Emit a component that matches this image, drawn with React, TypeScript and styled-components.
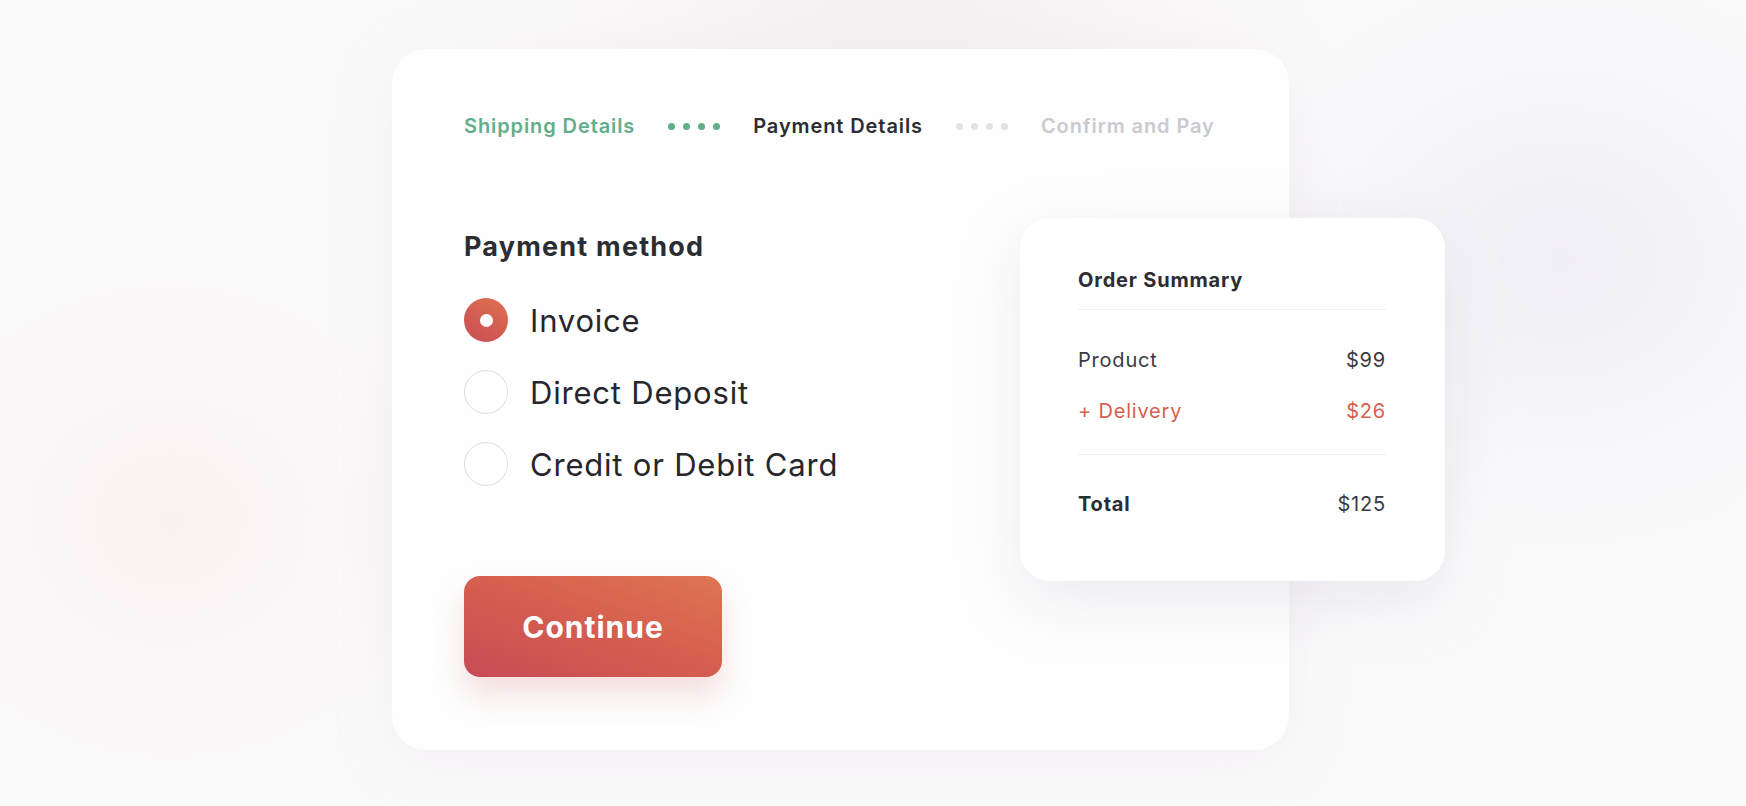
import React from 'react';
import styled, { createGlobalStyle } from 'styled-components';

const GlobalStyle = createGlobalStyle`
  html, body {
    margin: 0;
    padding: 0;
  }
  body {
    font-family: Inter, "Noto Sans", sans-serif;
    background: #fbfafb;
    color: #2c2c33;
  }
`;

const Page = styled.div`
  width: 1746px;
  height: 806px;
  overflow: hidden;
  box-sizing: border-box;
  padding: 49px 0 0 392px;
  background:
    radial-gradient(ellipse 420px 380px at 170px 520px, rgba(247, 232, 232, 0.45), transparent 70%),
    radial-gradient(ellipse 500px 420px at 1560px 260px, rgba(236, 234, 242, 0.7), transparent 70%),
    radial-gradient(ellipse 600px 200px at 900px 20px, rgba(240, 234, 236, 0.6), transparent 70%),
    #fbfafb;
`;

const Card = styled.div`
  position: relative;
  width: 897px;
  height: 701px;
  box-sizing: border-box;
  padding: 65px 72px 0;
  background: #fefefe;
  border-radius: 34px;
  box-shadow: 0 10px 60px rgba(200, 190, 200, 0.18);
  display: flex;
  flex-direction: column;
`;

const Stepper = styled.div`
  display: flex;
  align-items: center;
  gap: 33px;
  white-space: nowrap;
`;

const Step = styled.span<{ $state: 'done' | 'active' | 'todo' }>`
  flex-shrink: 0;
  font-size: 20px;
  font-weight: 600;
  line-height: 24px;
  letter-spacing: 0.9px;
  color: ${p => (p.$state === 'done' ? '#62ae8a' : p.$state === 'active' ? '#2c2c33' : '#cbcad0')};
`;

const Dots = styled.span<{ $done?: boolean }>`
  flex-shrink: 0;
  display: flex;
  gap: 8px;
  & > i {
    width: 7px;
    height: 7px;
    border-radius: 50%;
    background: ${p => (p.$done ? '#62ae8a' : '#e2e1e6')};
  }
`;

const Heading = styled.h2`
  margin: 93px 0 0;
  font-size: 27px;
  line-height: 32px;
  font-weight: 700;
  letter-spacing: 1.2px;
  color: #2c2c33;
`;

const RadioList = styled.div`
  margin-top: 35px;
  display: flex;
  flex-direction: column;
  gap: 28px;
`;

const RadioRow = styled.label`
  display: flex;
  align-items: center;
  gap: 22px;
  height: 44px;
  font-size: 31px;
  font-weight: 400;
  color: #26262c;
  letter-spacing: 0.8px;
`;

const Radio = styled.span<{ $checked?: boolean }>`
  width: 44px;
  height: 44px;
  box-sizing: border-box;
  border-radius: 50%;
  flex-shrink: 0;
  display: flex;
  align-items: center;
  justify-content: center;
  border: ${p => (p.$checked ? 'none' : '1.5px solid #dcdbe0')};
  background: ${p => (p.$checked ? 'linear-gradient(30deg, #c94c55, #de7150)' : '#fff')};
  &::after {
    content: '';
    display: ${p => (p.$checked ? 'block' : 'none')};
    width: 13px;
    height: 13px;
    border-radius: 50%;
    background: #fff;
  }
`;

const ContinueButton = styled.button`
  margin-top: 90px;
  width: 258px;
  height: 101px;
  border: none;
  border-radius: 16px;
  background: linear-gradient(20deg, #c74b55 0%, #d6604f 55%, #df7551 100%);
  box-shadow: 0 18px 30px rgba(210, 110, 110, 0.22);
  color: #fff;
  font-family: Inter, "Noto Sans", sans-serif;
  font-size: 30px;
  font-weight: 700;
  letter-spacing: 1px;
  cursor: pointer;
`;

const Summary = styled.div`
  position: absolute;
  left: 628px;
  top: 169px;
  width: 425px;
  height: 363px;
  box-sizing: border-box;
  padding: 50px 59px 0 58px;
  background: #fff;
  border-radius: 30px;
  box-shadow: 0 20px 60px rgba(190, 185, 200, 0.28);
`;

const SummaryTitle = styled.div`
  font-size: 20px;
  font-weight: 700;
  line-height: 24px;
  letter-spacing: 0.8px;
  color: #2c2c33;
  padding-bottom: 17px;
  border-bottom: 1px solid #f1eff2;
`;

const Lines = styled.div`
  padding: 38px 0 31px;
  display: flex;
  flex-direction: column;
  gap: 27px;
  border-bottom: 1px solid #f1eff2;
`;

const Line = styled.div<{ $accent?: boolean; $bold?: boolean }>`
  display: flex;
  justify-content: space-between;
  font-size: 20px;
  line-height: 24px;
  letter-spacing: 0.8px;
  color: ${p => (p.$accent ? '#d6604f' : '#3a3a42')};
  & > span:first-child {
    font-weight: ${p => (p.$bold ? 700 : 400)};
    color: ${p => (p.$bold ? '#2c2c33' : 'inherit')};
  }
`;

const TotalLine = styled(Line)`
  margin-top: 37px;
`;

const methods = ['Invoice', 'Direct Deposit', 'Credit or Debit Card'];

export default function App() {
  return (
    <>
      <GlobalStyle />
      <Page>
        <Card>
          <Stepper>
            <Step $state="done">Shipping Details</Step>
            <Dots $done><i /><i /><i /><i /></Dots>
            <Step $state="active">Payment Details</Step>
            <Dots><i /><i /><i /><i /></Dots>
            <Step $state="todo">Confirm and Pay</Step>
          </Stepper>

          <Heading>Payment method</Heading>
          <RadioList>
            {methods.map((m, i) => (
              <RadioRow key={m}>
                <Radio $checked={i === 0} />
                {m}
              </RadioRow>
            ))}
          </RadioList>

          <div>
            <ContinueButton>Continue</ContinueButton>
          </div>

          <Summary>
            <SummaryTitle>Order Summary</SummaryTitle>
            <Lines>
              <Line><span>Product</span><span>$99</span></Line>
              <Line $accent><span>+ Delivery</span><span>$26</span></Line>
            </Lines>
            <TotalLine $bold><span>Total</span><span>$125</span></TotalLine>
          </Summary>
        </Card>
      </Page>
    </>
  );
}
